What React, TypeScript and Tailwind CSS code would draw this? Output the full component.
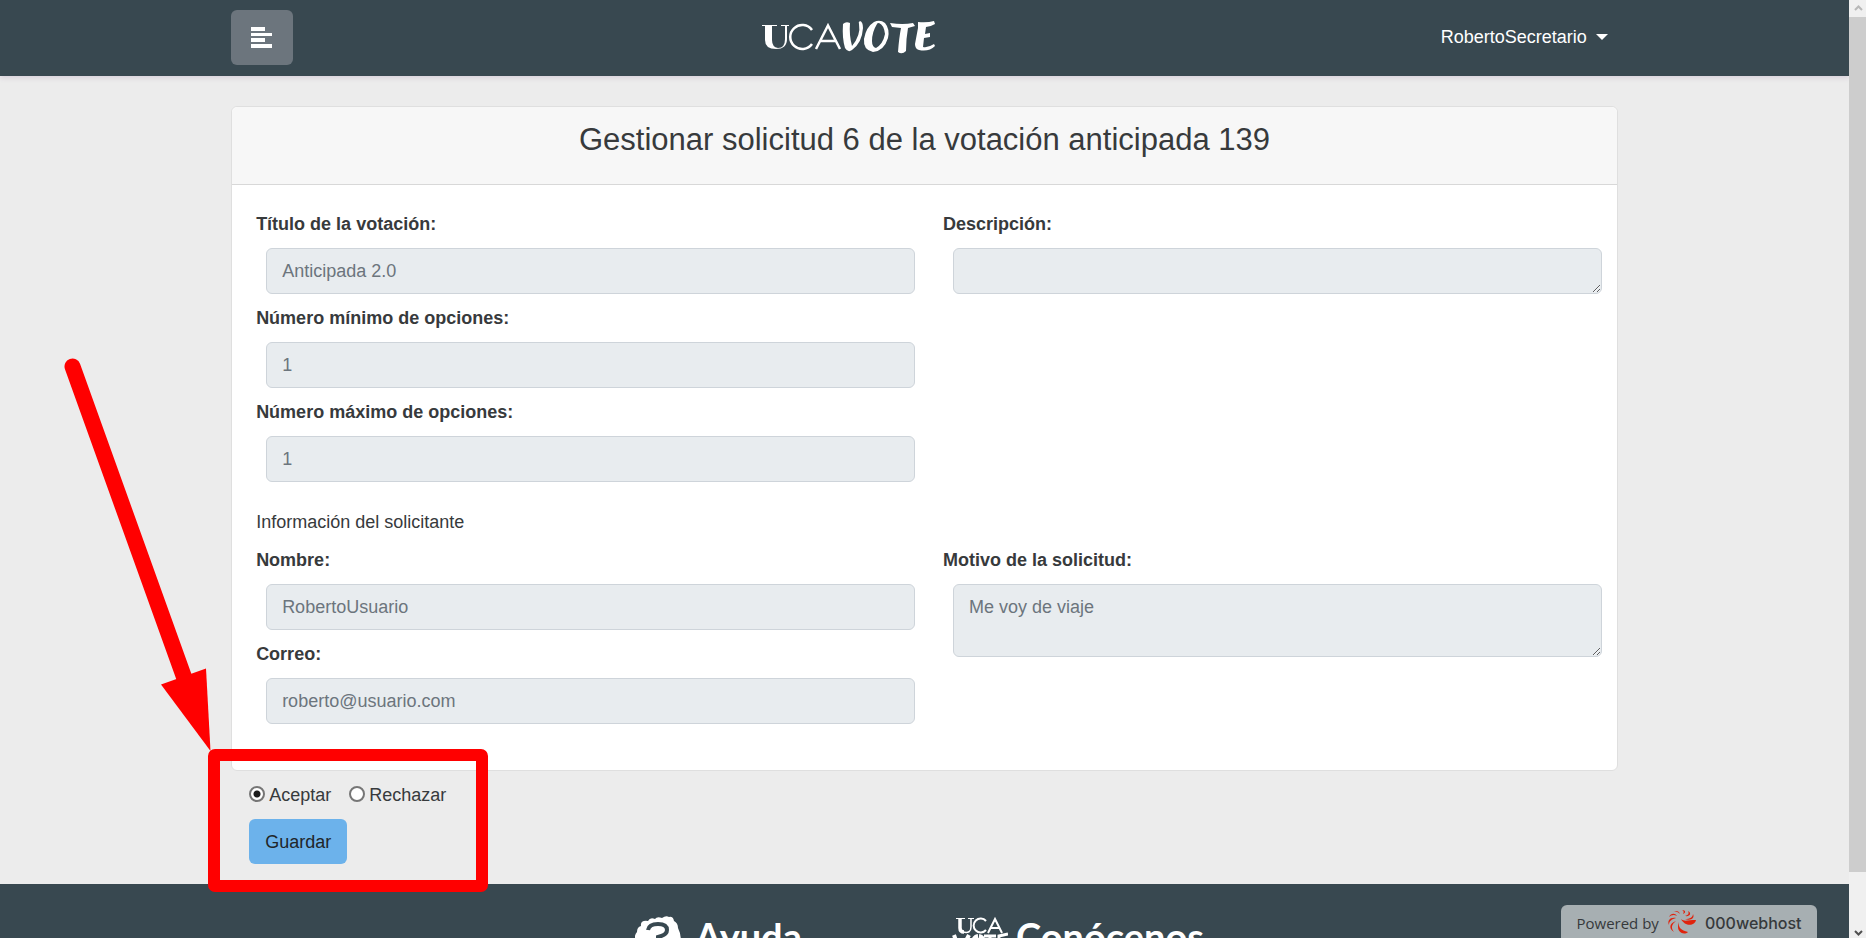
import React from "react";

type FieldProps = { id: string; label: string; value: string };

const boxClass =
  "ml-2.5 block rounded-md border border-[#ced4da] bg-[#e8ecef] px-[15px] text-lg text-[#6c757d] font-[inherit]";

const radioClass =
  "mb-[3px] size-4 appearance-none rounded-full border-2 border-[#767676] bg-white checked:bg-[radial-gradient(circle,#1c1c1c_3px,#fff_4px)]";

function TextField({ id, label, value }: FieldProps) {
  return (
    <div className="flex flex-col gap-2.5">
      <label htmlFor={id} className="text-lg leading-7 font-bold">{label}</label>
      <input id={id} disabled defaultValue={value} className={`${boxClass} h-[46px]`} />
    </div>
  );
}

function AreaField({ id, label, value, tall }: FieldProps & { tall?: boolean }) {
  return (
    <div className="flex flex-col gap-2.5">
      <label htmlFor={id} className="text-lg leading-7 font-bold">{label}</label>
      <textarea
        id={id}
        disabled
        defaultValue={value}
        className={`${boxClass} resize py-2 ${tall ? "h-[73px]" : "h-[46px]"}`}
      />
    </div>
  );
}

function VoteLogo() {
  return (
    <svg viewBox="0 0 176 40" className="h-10 w-44" fill="#fff" stroke="none" strokeLinecap="round" role="img" aria-label="UCAVOTE">
      <path d="M0 6H15V7H10V21Q10 28 16 29Q23 29 23 20V7H19V6H27V7H25V20Q25 30 14 30Q3 30 3 21V7H0Z" />
      <path d="M50 11A12 12 0 1 0 50 25M54 30L66 6.500L78 30M58 22H74" fill="none" stroke="#fff" strokeWidth="2.500" strokeLinecap="butt" />
      <path d="M81 5Q84 2 88 4Q87 16 90 27Q99 16 97 5Q96 3 98 2Q101 3 101 9Q100 24 90 31Q86 34 83 29Q80 19 81 5Z" />
      <path fillRule="evenodd" d="M112 3Q118 0 123 4Q128 10 126 19Q122 32 111 33Q101 31 102 20Q104 8 112 3ZM115 5Q110 13 110 22Q110 28 114 29Q121 25 123 15Q122 6 117 4Q115 4 115 5Z" />
      <path d="M128 4Q141 6 151 4L153 7L146 9Q144 20 144 32Q140 36 136 33Q137 19 139 9L130 8Z" />
      <path d="M156 3Q165 4 172 2L173 5Q168 8 164 8L163 15L168 14V18L162 19L161 28Q166 29 172 25L173 27Q167 33 157 31Q153 30 153 25L156 9Z" />
    </svg>
  );
}

function WebhostMark() {
  return (
    <svg viewBox="0 0 30 26" className="h-[26px] w-[30px]" fill="#e0230d" aria-hidden="true">
      <path d="M14 9C17 12 21 10 29 10C28 16 18 17 14 9Z" />
      <path d="M12 12C11 18 14 20 21 22C17 26 8 22 12 12Z" />
      <path d="M9 11C4 15 4 18 7 22C1 18 3 13 9 11Z" />
      <path d="M9 8C5 9 2 11 2 15C0 11 3 7 9 8Z" />
      <path d="M10 6C7 4 4 5 2 7C4 3 8 3 10 6Z" />
      <path d="M13 4C11 2 9 1 6 2C9 0 12 1 13 4Z" />
      <path d="M16 4C17 2 17 1 15 0C19 0 19 3 16 4Z" />
      <path d="M18 6C22 5 22 3 21 1C25 3 23 7 18 6Z" />
      <path d="M18 9C23 9 26 7 26 4C28 8 24 11 18 9Z" />
    </svg>
  );
}

export default function App() {
  return (
    <div className="flex h-screen overflow-hidden bg-[#ececec] font-['Liberation_Sans',Arial,sans-serif] text-lg leading-7 text-[#373a3c]">
      <div className="relative flex min-w-0 flex-1 flex-col overflow-hidden">
        <header className="relative h-[76px] shrink-0 bg-[#384850] shadow-[0_2px_5px_rgba(90,40,110,0.14)]">
          <div className="mx-auto flex h-full w-3/4 items-start justify-between pt-2.5">
            <button aria-label="Menú" className="flex h-[55px] w-[62px] items-center justify-center rounded-md bg-[#6c757d]">
              <svg viewBox="0 0 22 22" className="size-[22px]" fill="#fff" aria-hidden="true">
                <path d="M0 0H14V4H0ZM0 6H21V9H0ZM0 11H14V15H0ZM0 17H21V21H0Z" />
              </svg>
            </button>
            <a href="#inicio" className="pt-[9px] pr-6"><VoteLogo /></a>
            <button className="flex items-center gap-[9px] px-2.5 pt-[13px] text-white">
              RobertoSecretario
              <span className="border-x-[6px] border-t-[6px] border-x-transparent border-t-white" />
            </button>
          </div>
        </header>

        <main className="mx-auto h-[808px] w-3/4 shrink-0 pt-[30px]">
          <section className="h-[665px] rounded-md border border-[#dfdfdf] bg-white">
            <h1 className="h-[78px] rounded-t-md border-b border-[#d8d8d8] bg-[#f7f7f7] pt-[13px] text-center text-[31px] leading-10">
              Gestionar solicitud 6 de la votación anticipada 139
            </h1>
            <div className="pt-[25px] pl-[11px]">
              <div className="grid grid-cols-2">
                <div className="flex flex-col gap-2.5 pr-[15px] pl-[13px]">
                  <TextField id="titulo" label="Título de la votación:" value="Anticipada 2.0" />
                  <TextField id="minimo" label="Número mínimo de opciones:" value="1" />
                  <TextField id="maximo" label="Número máximo de opciones:" value="1" />
                </div>
                <div className="pr-[15px] pl-[13px]">
                  <AreaField id="descripcion" label="Descripción:" value="" />
                </div>
              </div>
              <p className="mt-[26px] pb-2.5 pl-[13px]">Información del solicitante</p>
              <div className="grid grid-cols-2">
                <div className="flex flex-col gap-2.5 pr-[15px] pl-[13px]">
                  <TextField id="nombre" label="Nombre:" value="RobertoUsuario" />
                  <TextField id="correo" label="Correo:" value="roberto@usuario.com" />
                </div>
                <div className="pr-[15px] pl-[13px]">
                  <AreaField id="motivo" label="Motivo de la solicitud:" value="Me voy de viaje" tall />
                </div>
              </div>
            </div>
          </section>
          <form className="pt-2.5 pl-[18px]" onSubmit={(e) => e.preventDefault()}>
            <div className="flex gap-[18px]">
              <label className="flex items-center gap-1">
                <input type="radio" name="decision" defaultChecked className={radioClass} />
                Aceptar
              </label>
              <label className="flex items-center gap-1">
                <input type="radio" name="decision" className={radioClass} />
                Rechazar
              </label>
            </div>
            <button className="mt-2.5 h-[45px] rounded-md bg-[#6cb2eb] px-4 text-[#212529]">Guardar</button>
          </form>
        </main>

        <footer className="flex h-32 shrink-0 justify-center gap-[150px] bg-[#384850] pt-8 pr-2.5 font-['Lato',sans-serif] text-[38px] leading-10 font-bold text-white">
          <a href="#ayuda" className="flex gap-3.5">
            <svg viewBox="0 0 46 46" className="size-[46px]" aria-hidden="true">
              <path d="M6 10Q5 4 13 5Q15 1 20 3Q22 0 27 2Q31-1 34 1Q38 0 39 5Q43 7 43 12Q48 22 44 32Q38 44 23 45Q6 44 3 30Q-3 22 2 16Q2 11 6 10Z" fill="#fff" />
              <path d="M13 14Q14 8 23 8Q32 8 32 14Q32 19 23 21V26" fill="none" stroke="#384850" strokeWidth="4" />
            </svg>
            Ayuda
          </a>
          <a href="#conocenos" className="flex gap-2">
            <svg viewBox="0 0 56 46" className="h-[46px] w-14" fill="none" stroke="#fff" aria-hidden="true">
              <path d="M4 2.500H13M16 2.500H22" />
              <path d="M8 3V12Q8 16 12 16" strokeWidth="3.500" />
              <path d="M11 16Q19 18 19 11V3" strokeWidth="1.500" />
              <path d="M34 5A7 7 0 1 0 34 14M36 17L43 3L50 17M38 12H48" strokeWidth="2" />
              <path d="M2 19L8 36L17 19" strokeWidth="4" />
              <path d="M26 20A6 8 0 1 0 27 20" strokeWidth="4" />
              <path d="M32 20H44M38 20V36" strokeWidth="3" />
              <path d="M56 18L47 20V36H54M47 28H52" strokeWidth="3" />
            </svg>
            Conócenos
          </a>
        </footer>

        <a href="#webhost" className="absolute right-8 bottom-0 flex h-[33px] w-64 items-center justify-center gap-2 rounded-t-md bg-[#a7afb2] pt-0.5 font-['Open_Sans',sans-serif] text-[15px] text-[#36393b]">
          Powered by
          <WebhostMark />
          <span className="font-['Inter',sans-serif] text-base font-medium">000webhost</span>
        </a>

        <svg className="pointer-events-none absolute top-0 left-0 h-[938px] w-[500px]" fill="red" aria-hidden="true">
          <path d="M72.500 366.500L184 677" stroke="red" strokeWidth="16" strokeLinecap="round" />
          <path d="M161 684.500L206 668.500L210.500 751Z" />
          <rect x="214" y="755" width="268" height="131" rx="1" fill="none" stroke="red" strokeWidth="12" strokeLinejoin="round" />
        </svg>
      </div>

      <div className="flex w-[17px] shrink-0 flex-col bg-[#f0f0f0]" aria-hidden="true">
        <svg viewBox="0 0 17 17" className="size-[17px]" fill="none" stroke="#b8b8b8" strokeWidth="2">
          <path d="M6 10L9.500 6.500L13 10" />
        </svg>
        <div className="grow-[855] bg-[#cdcdcd]" />
        <div className="grow-[49]" />
        <svg viewBox="0 0 17 17" className="size-[17px]" fill="none" stroke="#505050" strokeWidth="2">
          <path d="M6 10L9.500 13.500L13 10" />
        </svg>
      </div>
    </div>
  );
}
